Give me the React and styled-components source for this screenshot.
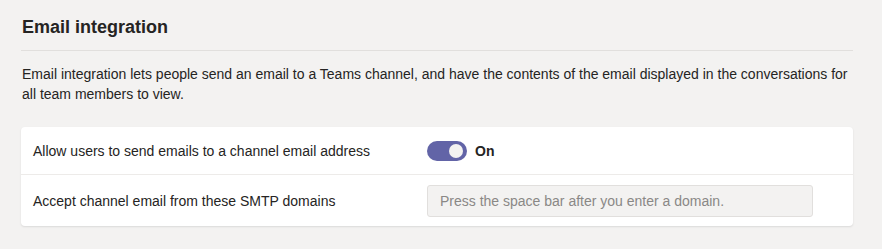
import React from "react";
import styled, { createGlobalStyle } from "styled-components";

const Global = createGlobalStyle`
  html, body { margin: 0; padding: 0; background: #f3f2f1; }
  body { font-family: "Segoe UI", "Liberation Sans", Arial, sans-serif; color: #252423; }
  * { box-sizing: border-box; }
`;

const Page = styled.div`
  width: 882px;
  height: 249px;
  padding: 14px 29px 0 21px;
  background: #f3f2f1;
`;

const Title = styled.h2`
  margin: 0;
  padding: 0 0 0 1px;
  font-size: 18px;
  line-height: 26px;
  font-weight: 700;
  color: #252423;
  height: 37px;
  border-bottom: 1px solid #e1dfdd;
`;

const Description = styled.p`
  margin: 0;
  padding: 13px 0 0 1px;
  font-size: 14px;
  line-height: 20px;
  color: #252423;
`;

const Card = styled.div`
  margin-top: 23px;
  background: #ffffff;
  border-radius: 4px;
  box-shadow: 0 1px 2px rgba(0, 0, 0, 0.1);
`;

const Row = styled.div`
  display: grid;
  grid-template-columns: 394px 1fr;
  align-items: center;
  padding: 0 12px;
  height: ${(p) => p.$h}px;
  border-top: ${(p) => (p.$divider ? "1px solid #edebe9" : "none")};
`;

const Label = styled.span`
  font-size: 14px;
  line-height: 20px;
  color: #252423;
`;

const ToggleWrap = styled.div`
  display: flex;
  align-items: center;
  gap: 8px;
`;

const Track = styled.span`
  position: relative;
  display: inline-block;
  width: 40px;
  height: 20px;
  border-radius: 10px;
  background: #6264a7;
`;

const Knob = styled.span`
  position: absolute;
  top: 3px;
  right: 4px;
  width: 14px;
  height: 14px;
  border-radius: 50%;
  background: #f3f2f1;
`;

const ToggleText = styled.span`
  font-size: 14px;
  font-weight: 600;
  color: #252423;
`;

const Input = styled.input`
  width: 386px;
  height: 32px;
  padding: 0 12px;
  border: 1px solid #e1dfdd;
  border-radius: 3px;
  background: #f3f2f1;
  font-family: inherit;
  font-size: 14px;
  color: #252423;
  outline: none;
  &::placeholder { color: #8a8886; }
`;

export default function App() {
  return (
    <>
      <Global />
      <Page>
        <Title>Email integration</Title>
        <Description>
          Email integration lets people send an email to a Teams channel, and have the contents of the email displayed in the conversations for all team members to view.
        </Description>
        <Card>
          <Row $h={47}>
            <Label>Allow users to send emails to a channel email address</Label>
            <ToggleWrap>
              <Track><Knob /></Track>
              <ToggleText>On</ToggleText>
            </ToggleWrap>
          </Row>
          <Row $h={52} $divider>
            <Label>Accept channel email from these SMTP domains</Label>
            <Input placeholder="Press the space bar after you enter a domain." readOnly />
          </Row>
        </Card>
      </Page>
    </>
  );
}
